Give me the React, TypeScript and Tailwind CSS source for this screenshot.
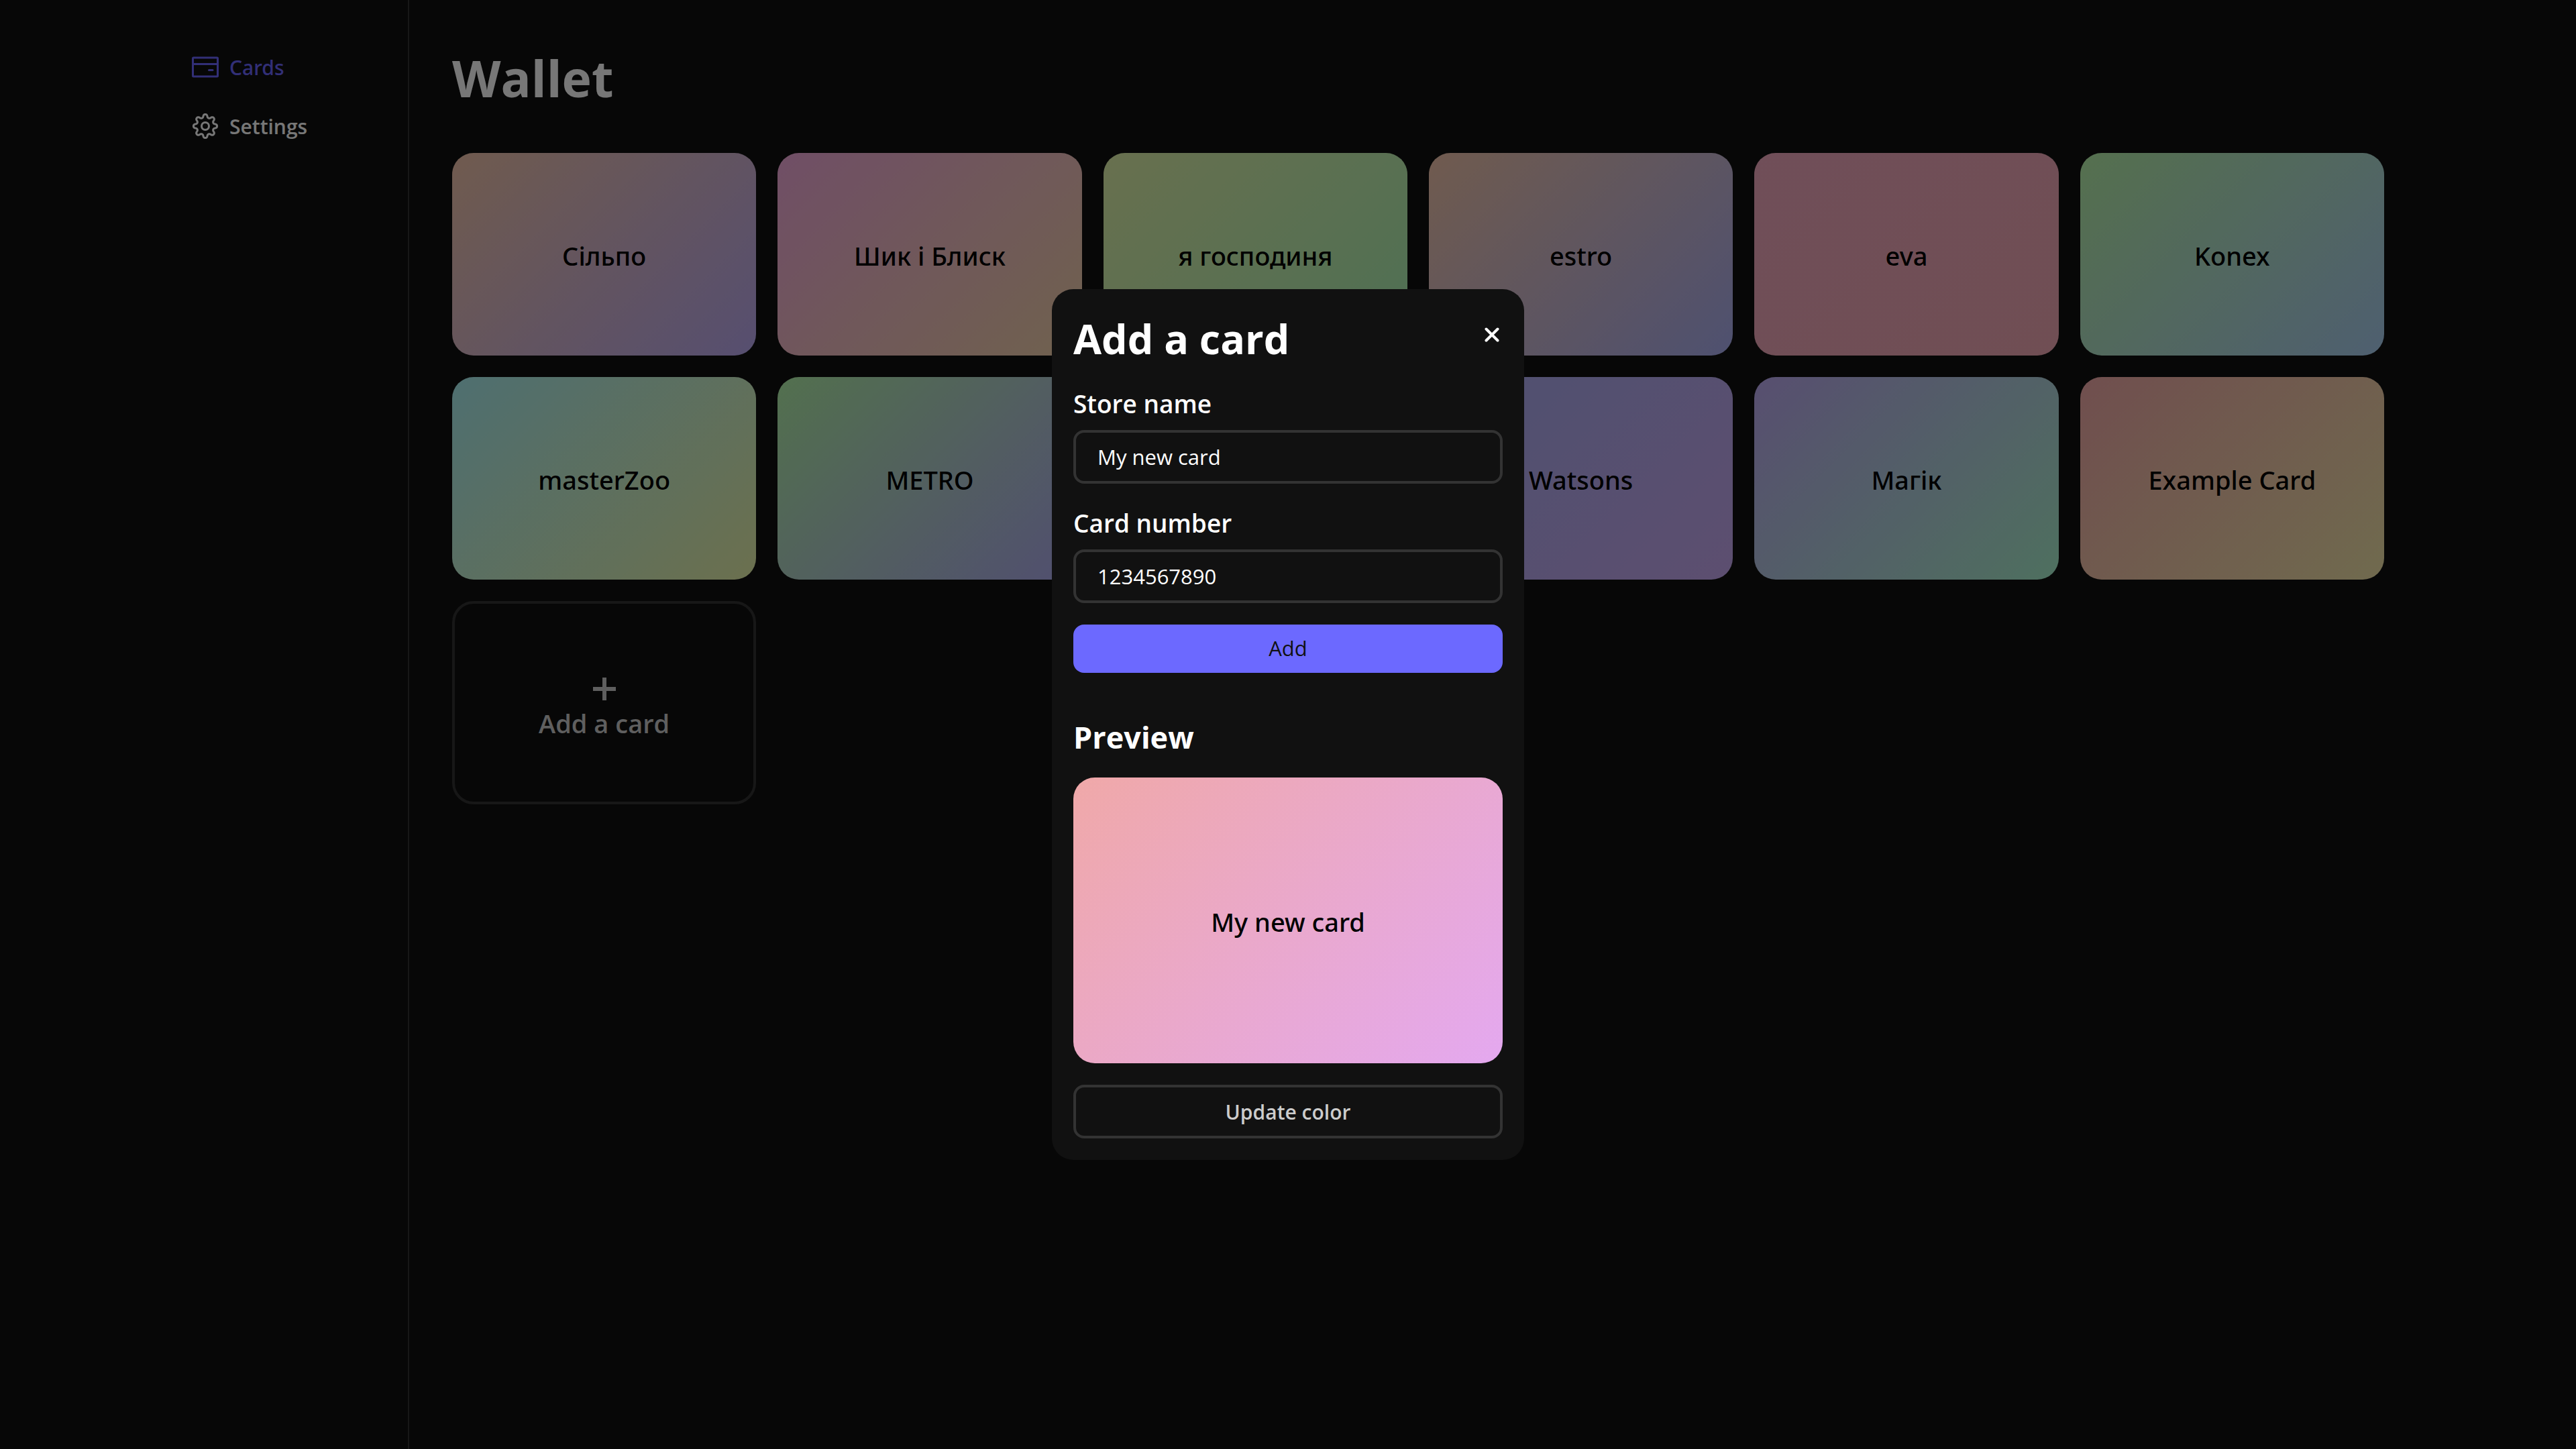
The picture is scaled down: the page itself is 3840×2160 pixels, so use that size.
import { useState } from "react";

type Card = { name: string; from: number; to: number };

const cards: Card[] = [
  { name: "Сільпо", from: 22, to: 254 },
  { name: "Шик і Блиск", from: 318, to: 34 },
  { name: "я господиня", from: 74, to: 130 },
  { name: "estro", from: 22, to: 236 },
  { name: "eva", from: 342, to: 350 },
  { name: "Konex", from: 108, to: 210 },
  { name: "masterZoo", from: 182, to: 68 },
  { name: "METRO", from: 112, to: 244 },
  { name: "", from: 180, to: 240 },
  { name: "Watsons", from: 236, to: 266 },
  { name: "Магік", from: 256, to: 150 },
  { name: "Example Card", from: 0, to: 50 },
];

function gradient(from: number, to: number) {
  return {
    backgroundImage: `linear-gradient(135deg, hsl(${from} 70% 80%), hsl(${to} 70% 80%))`,
  };
}

function gearPath() {
  const steps = 160;
  const points: string[] = [];
  for (let i = 0; i < steps; i++) {
    const t = (i / steps) * Math.PI * 2;
    const r = 15.2 + 2.4 * Math.cos(8 * t);
    const a = t + 0.03 * Math.sin(16 * t);
    points.push(`${(20 + r * Math.sin(a)).toFixed(2)} ${(20 - r * Math.cos(a)).toFixed(2)}`);
  }
  return `M${points.join("L")}Z`;
}

function CardIcon() {
  return (
    <svg viewBox="0 0 40 40" className="size-10" fill="none" stroke="currentColor" strokeWidth="3" aria-hidden="true">
      <rect x="1.5" y="6" width="37" height="28" rx="1" />
      <path d="M1.5 15.5h37" />
      <path d="M25.5 24.5h5.5" strokeLinecap="round" />
    </svg>
  );
}

function GearIcon() {
  return (
    <svg viewBox="0 0 40 40" className="size-10" fill="none" stroke="currentColor" strokeWidth="3" strokeLinejoin="round" aria-hidden="true">
      <path d={gearPath()} />
      <circle cx="20" cy="20" r="5.5" />
    </svg>
  );
}

function Sidebar() {
  return (
    <aside className="w-[324px] shrink-0 border-r-2 border-[#333333] pt-14">
      <nav className="flex flex-col">
        <a href="#cards" className="flex h-[88px] items-center gap-4 font-['Noto_Sans',sans-serif] text-[30px] font-medium text-[#6c66ff]">
          <CardIcon />
          Cards
        </a>
        <a href="#settings" className="flex h-[88px] items-center gap-4 text-[30px] font-semibold text-white">
          <GearIcon />
          Settings
        </a>
      </nav>
    </aside>
  );
}

function CardGrid() {
  return (
    <div className="grid grid-cols-6 gap-8">
      {cards.map((card, i) =>
        card.name ? (
          <button
            key={i}
            type="button"
            style={gradient(card.from, card.to)}
            className="flex aspect-3/2 items-center justify-center rounded-[32px] pt-1 font-['Noto_Sans',sans-serif] text-[38px] font-medium text-black"
          >
            {card.name}
          </button>
        ) : (
          <div key={i} style={gradient(card.from, card.to)} className="aspect-3/2 rounded-[32px]" />
        ),
      )}
      <button
        type="button"
        className="flex aspect-3/2 flex-col items-center justify-center gap-1 rounded-[32px] border-4 border-[#333333] pt-4 text-[38px] leading-[54px] font-semibold text-[#cccccc]"
      >
        <svg viewBox="0 0 40 40" className="size-10" stroke="currentColor" strokeWidth="6" aria-hidden="true">
          <path d="M20 3v34M3 20h34" />
        </svg>
        Add a card
      </button>
    </div>
  );
}

function Field({ id, label, value, onChange }: { id: string; label: string; value: string; onChange: (v: string) => void }) {
  return (
    <div className="flex flex-col gap-3">
      <label htmlFor={id} className="text-[37px] leading-[54px] font-semibold">
        {label}
      </label>
      <input
        id={id}
        type="text"
        value={value}
        onChange={(e) => onChange(e.target.value)}
        className="h-20 w-full rounded-2xl border-4 border-[#333333] bg-transparent px-8 text-[31px] text-white outline-none"
      />
    </div>
  );
}

function AddCardDialog() {
  const [name, setName] = useState("My new card");
  const [number, setNumber] = useState("1234567890");
  return (
    <div role="dialog" aria-modal="true" aria-labelledby="dialog-title" className="w-[704px] max-w-full rounded-[32px] bg-[#111111] p-8 text-white">
      <form className="flex flex-col" onSubmit={(e) => e.preventDefault()}>
        <div className="mb-7 flex items-start justify-between">
          <h2 id="dialog-title" className="text-[61px] leading-[84px] font-bold">
            Add a card
          </h2>
          <button type="button" aria-label="Close" className="flex h-[72px] w-8 items-center justify-center">
            <svg viewBox="0 0 24 24" className="size-6" stroke="currentColor" strokeWidth="4" strokeLinecap="round" aria-hidden="true">
              <path d="M3.500 3.500l17 17M20.500 3.500l-17 17" />
            </svg>
          </button>
        </div>
        <div className="flex flex-col gap-8">
          <Field id="store-name" label="Store name" value={name} onChange={setName} />
          <Field id="card-number" label="Card number" value={number} onChange={setNumber} />
          <button type="submit" className="h-[72px] rounded-2xl bg-[#6c69ff] text-[31px] text-[#111111]">
            Add
          </button>
        </div>
      </form>
      <section className="mt-16 flex flex-col">
        <h3 className="mb-7 text-[45px] leading-[64px] font-bold">Preview</h3>
        <div
          style={gradient(0, 290)}
          className="mb-8 flex aspect-3/2 items-center justify-center rounded-[32px] pt-1 font-['Noto_Sans',sans-serif] text-[38px] font-medium text-black"
        >
          {name}
        </div>
        <button type="button" className="h-20 rounded-2xl border-4 border-[#333333] text-[30px] font-semibold text-[#cccccc]">
          Update color
        </button>
      </section>
    </div>
  );
}

export default function App() {
  return (
    <div className="min-h-screen bg-[#111111] font-['Open_Sans','Noto_Sans',sans-serif]">
      <div className="mx-auto flex min-h-screen max-w-[3268px]">
        <Sidebar />
        <main className="min-w-0 flex-1 pt-16 pl-16">
          <h1 className="mb-[60px] text-[75px] leading-[104px] font-bold text-white">Wallet</h1>
          <CardGrid />
        </main>
      </div>
      <div className="fixed inset-0 flex items-center justify-center bg-[#00000088]">
        <AddCardDialog />
      </div>
    </div>
  );
}
